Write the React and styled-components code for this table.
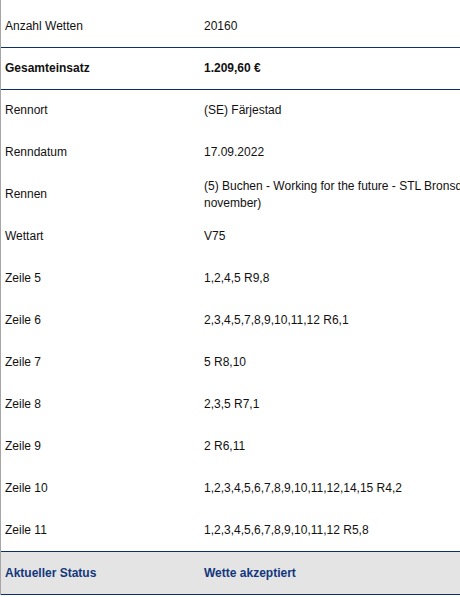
import React from 'react';
import styled, {createGlobalStyle} from 'styled-components';

const GlobalStyle = createGlobalStyle`
  body {
    margin: 0;
    background: #ffffff;
    overflow: hidden;
    font-family: "Liberation Sans", Arial, sans-serif;
    font-size: 12px;
    color: #111111;
  }
`;

const Sheet = styled.div`
  width: 648px;
  padding-top: 6px;
  border-left: 1px solid #a6a6a6;
`;

const Row = styled.div`
  display: grid;
  grid-template-columns: 199px 440px;
  align-items: center;
  height: ${(p) => (p.$status ? '42px' : '41px')};
  padding: 0 4px;
  line-height: 17px;
  font-weight: ${(p) => (p.$bold || p.$status ? 'bold' : 'normal')};
  color: ${(p) => (p.$status ? '#12377c' : '#111111')};
  background: ${(p) => (p.$status ? '#e4e4e4' : 'transparent')};
  border-bottom: 1px solid ${(p) => (p.$line || p.$status ? '#0c2f6c' : 'transparent')};
`;

const Label = styled.div``;

const Value = styled.div``;

const rows = [
  {label: 'Anzahl Wetten', value: '20160', line: true},
  {label: 'Gesamteinsatz', value: '1.209,60 €', line: true, bold: true},
  {label: 'Rennort', value: '(SE) Färjestad'},
  {label: 'Renndatum', value: '17.09.2022'},
  {label: 'Rennen', value: '(5) Buchen - Working for the future - STL Bronsdivisionen, Final (september-november)'},
  {label: 'Wettart', value: 'V75'},
  {label: 'Zeile 5', value: '1,2,4,5 R9,8'},
  {label: 'Zeile 6', value: '2,3,4,5,7,8,9,10,11,12 R6,1'},
  {label: 'Zeile 7', value: '5 R8,10'},
  {label: 'Zeile 8', value: '2,3,5 R7,1'},
  {label: 'Zeile 9', value: '2 R6,11'},
  {label: 'Zeile 10', value: '1,2,3,4,5,6,7,8,9,10,11,12,14,15 R4,2'},
  {label: 'Zeile 11', value: '1,2,3,4,5,6,7,8,9,10,11,12 R5,8', line: true},
];

const App = () => {
  return (
    <>
      <GlobalStyle />
      <Sheet>
        {rows.map((r) => (
          <Row key={r.label} $line={r.line} $bold={r.bold}>
            <Label>{r.label}</Label>
            <Value>{r.value}</Value>
          </Row>
        ))}
        <Row $status>
          <Label>Aktueller Status</Label>
          <Value>Wette akzeptiert</Value>
        </Row>
      </Sheet>
    </>
  );
};

export default App;
